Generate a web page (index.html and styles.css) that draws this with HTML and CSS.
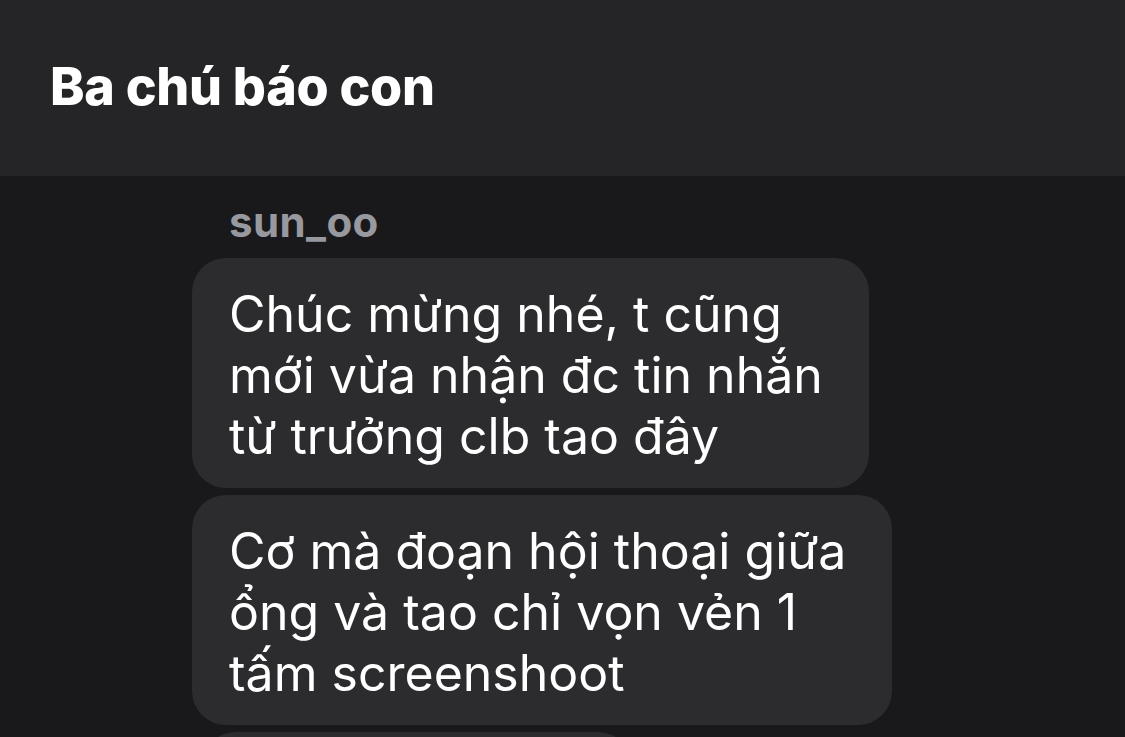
FILE: index.html
```html
<!DOCTYPE html>
<html lang="vi">
<head>
<meta charset="utf-8">
<link rel="stylesheet" href="styles.css">
</head>
<body>
<header class="topbar">
  <h1 class="title">Ba chú báo con</h1>
</header>
<main class="thread">
  <div class="sender">sun_oo</div>
  <div class="messages">
    <div class="bubble">Chúc mừng nhé, t cũng<br>mới vừa nhận đc tin nhắn<br>từ trưởng clb tao đây</div>
    <div class="bubble">Cơ mà đoạn hội thoại giữa<br>ổng và tao chỉ vọn vẻn 1<br>tấm screenshoot</div>
    <div class="bubble bubble-next"></div>
  </div>
</main>
</body>
</html>
```
FILE: styles.css
```css
* { box-sizing: border-box; }
html, body {
  margin: 0;
  padding: 0;
  width: 1125px;
  height: 737px;
  overflow: hidden;
  background: #19191b;
  font-family: Inter, "Noto Sans", sans-serif;
}
.topbar {
  height: 176px;
  background: #252528;
  display: flex;
  align-items: center;
  padding-left: 50px;
}
.title {
  margin: 0;
  color: #ffffff;
  font-size: 52px;
  font-weight: 800;
  letter-spacing: -0.3px;
  line-height: 1;
  padding-bottom: 2px;
}
.thread {
  padding-left: 192px;
  padding-top: 22px;
}
.sender {
  color: #98989f;
  font-size: 42px;
  font-weight: 700;
  letter-spacing: 0.4px;
  line-height: 48px;
  padding-left: 37px;
  margin-bottom: 12px;
}
.messages {
  display: flex;
  flex-direction: column;
  align-items: flex-start;
  gap: 7px;
}
.bubble {
  background: #2c2c2e;
  border-radius: 34px;
  color: #ffffff;
  font-size: 50px;
  font-weight: 400;
  line-height: 61px;
  padding: 26px 46px 21px 37px;
  white-space: nowrap;
}
.bubble-next {
  width: 430px;
  height: 108px;
  margin-left: 10px;
}
```
